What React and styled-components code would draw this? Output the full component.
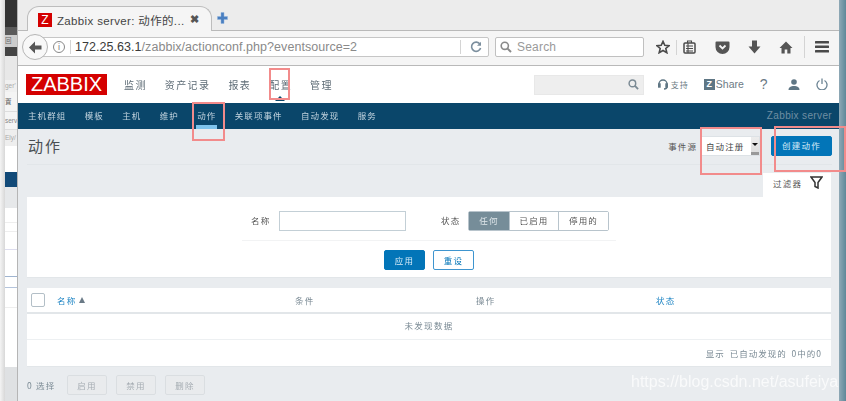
import React from "react";
import styled, { createGlobalStyle } from "styled-components";

const cjk = `"Noto Sans CJK SC", "Liberation Sans", sans-serif`;
const latin = `"Liberation Sans", "Noto Sans CJK SC", sans-serif`;

const Global = createGlobalStyle`
  html, body { margin: 0; padding: 0; background: #e9ecef; }
  * { box-sizing: border-box; }
`;

const Screen = styled.div`
  position: relative;
  width: 846px;
  height: 401px;
  overflow: hidden;
  display: flex;
  font-family: ${cjk};
  filter: blur(0.45px);
`;

/* ---- desktop slivers ---- */
const Margin = styled.div`
  width: 5px;
  flex: none;
  background: linear-gradient(90deg, #f4f4f4, #d8d8d8);
`;
const Behind = styled.div`
  width: 13px;
  flex: none;
  display: flex;
  flex-direction: column;
  overflow: hidden;
  border-right: 1px solid #b5b5b5;
  box-shadow: inset -2px 0 2px #c4c4c4;
`;
const Strip = styled.div`
  height: ${(p) => p.$h}px;
  flex: none;
  background: ${(p) => p.$bg};
  color: ${(p) => p.$fg || "#777"};
  font: 6.5px/${(p) => p.$h}px ${latin};
  white-space: nowrap;
  border-bottom: ${(p) => (p.$line ? `1px solid ${p.$line}` : "0")};
`;
const EdgeRight = styled.div`
  width: 7px;
  flex: none;
  background: linear-gradient(90deg, #8fa9b6, #5f8899);
`;

/* ---- browser chrome ---- */
const Win = styled.div`
  width: 821px;
  flex: none;
  display: flex;
  flex-direction: column;
  background: #e9ecef;
`;
const TabBar = styled.div`
  height: 31px;
  flex: none;
  background: #ececec;
  border-bottom: 1px solid #b9b9b9;
  display: flex;
  align-items: flex-end;
  padding-left: 9px;
`;
const Tab = styled.div`
  width: 185px;
  height: 25px;
  margin-bottom: -1px;
  background: #f5f5f5;
  border: 1px solid #bdbdbd;
  border-bottom: 0;
  border-radius: 12px 12px 0 0;
  display: flex;
  align-items: center;
  padding: 1px 0 0 10px;
`;
const Favicon = styled.div`
  width: 14px;
  height: 14px;
  background: #d40000;
  color: #fff;
  font: 12px/14px ${latin};
  text-align: center;
`;
const TabTitle = styled.div`
  margin-left: 5px;
  width: 133px;
  font: 11.5px ${latin};
  letter-spacing: 0.35px;
  color: #444;
  white-space: nowrap;
`;
const TabClose = styled.div`
  font: bold 11px ${latin};
  color: #555;
`;
const NewTab = styled.div`
  margin: 0 0 6px 5px;
  align-self: flex-end;
  display: flex;
`;
const Toolbar = styled.div`
  height: 35px;
  flex: none;
  background: #f5f5f5;
  border-bottom: 1px solid #b9b9b9;
  display: flex;
  align-items: center;
  position: relative;
`;
const BackBtn = styled.div`
  position: absolute;
  left: 4px;
  top: 3px;
  width: 26px;
  height: 26px;
  border-radius: 50%;
  background: #f8f8f8;
  border: 1px solid #b5b5b5;
  display: flex;
  align-items: center;
  justify-content: center;
`;
const UrlBox = styled.div`
  margin: 0 0 2px 22px;
  width: 449px;
  height: 20px;
  flex: none;
  background: #fff;
  border: 1px solid #c6c6c6;
  border-radius: 0 2px 2px 0;
  display: flex;
  align-items: center;
  padding-left: 12px;
`;
const InfoIcon = styled.div`
  width: 12px;
  height: 12px;
  flex: none;
  border-radius: 50%;
  border: 1px solid #888;
  color: #777;
  font: 9px/10px ${latin};
  text-align: center;
`;
const Divider = styled.div`
  width: 1px;
  flex: none;
  height: ${(p) => p.$h || 14}px;
  background: #d4d4d4;
  margin: 0 ${(p) => p.$r || 0}px 0 ${(p) => p.$l || 0}px;
`;
const UrlText = styled.div`
  font: 12.5px ${latin};
  letter-spacing: 0.05px;
  color: #8a8a8a;
  width: 385px;
  flex: none;
  white-space: nowrap;
  span { color: #3a3a3a; }
`;
const SearchBox = styled.div`
  margin: 0 0 2px 6px;
  width: 149px;
  height: 20px;
  flex: none;
  background: #fff;
  border: 1px solid #c0c0c0;
  border-radius: 2px;
  display: flex;
  align-items: center;
  padding-left: 4px;
  gap: 5px;
  font: 12px ${latin};
  letter-spacing: 0.2px;
  color: #9a9a9a;
`;
const ToolIcons = styled.div`
  display: flex;
  align-items: center;
  margin: 0 0 2px 12px;
`;
const ToolSlot = styled.div`
  width: ${(p) => p.$w}px;
  margin-left: ${(p) => p.$ml || 0}px;
  flex: none;
  display: flex;
  justify-content: center;
`;

/* ---- zabbix ---- */
const Head = styled.div`
  height: 37px;
  flex: none;
  background: #fff;
  display: flex;
  align-items: center;
  padding: 0 0 1px 8px;
`;
const Logo = styled.div`
  width: 81px;
  height: 21px;
  margin-top: 1px;
  flex: none;
  background: #d40000;
  color: #fff;
  font: 20px/21px ${latin};
  text-align: center;
`;
const Menu = styled.div`
  display: flex;
  margin-left: 17px;
  gap: 18px;
`;
const MenuItem = styled.div`
  font-size: 10px;
  letter-spacing: 1.4px;
  color: #5d6b75;
  white-space: nowrap;
  position: relative;
`;
const Caret = styled.div`
  position: absolute;
  left: 6px;
  top: 19px;
  border: 5px solid transparent;
  border-top: 0;
  border-bottom-color: #0a466a;
`;
const HeadSearch = styled.div`
  margin: 1px 0 0 201px;
  width: 110px;
  height: 20px;
  flex: none;
  background: #eee;
  border: 1px solid #e8e8e8;
  display: flex;
  justify-content: flex-end;
  align-items: center;
  padding-right: 4px;
`;
const HeadLinks = styled.div`
  display: flex;
  align-items: center;
  margin-left: 14px;
  color: #6c7a84;
`;
const Support = styled.div`
  display: flex;
  align-items: center;
  gap: 3px;
  font-size: 8px;
  letter-spacing: 0.8px;
  width: 46px;
`;
const ZBox = styled.div`
  width: 11px;
  height: 11px;
  background: #5f7684;
  color: #fff;
  font: bold 9px/11px ${latin};
  text-align: center;
`;
const Share = styled.div`
  display: flex;
  align-items: center;
  gap: 1px;
  width: 56px;
  font: 10.5px ${latin};
`;
const Help = styled.div`
  width: 28px;
  font: 14px ${latin};
  color: #6c7a84;
`;
const HeadIcon = styled.div`
  width: ${(p) => p.$w}px;
  display: flex;
`;

const Nav = styled.div`
  height: 26px;
  flex: none;
  background: #0a466a;
  display: flex;
  align-items: center;
  padding: 0 7px 2px 10px;
`;
const NavItem = styled.div`
  position: relative;
  font-size: 8.5px;
  letter-spacing: 1.1px;
  color: #c3d4df;
  margin-right: 18.3px;
  white-space: nowrap;
`;
const NavBar = styled.div`
  position: absolute;
  left: -1px;
  right: -1px;
  top: 16px;
  height: 4px;
  background: #7fc4ec;
`;
const NavRight = styled.div`
  margin-left: auto;
  font: 10px ${latin};
  letter-spacing: 0.35px;
  color: #6f8ea3;
`;

const Page = styled.div`
  flex: 1;
  padding: 0 8px 0 9px;
  display: flex;
  flex-direction: column;
`;
const TitleRow = styled.div`
  height: 36px;
  flex: none;
  margin-right: -1px;
  border-bottom: 1px solid #e2e6e9;
  display: flex;
  align-items: center;
  padding: 0 0 2px 1px;
`;
const Title = styled.div`
  font-size: 15px;
  letter-spacing: 2px;
  color: #4a4f53;
`;
const Source = styled.div`
  margin-left: auto;
  font-size: 8.5px;
  letter-spacing: 1.1px;
  color: #555;
`;
const Select = styled.div`
  margin-left: 4px;
  width: 59px;
  height: 20px;
  background: #fff;
  border: 1px solid #dde2e6;
  display: flex;
  align-items: center;
  font-size: 8.5px;
  letter-spacing: 1.1px;
  color: #444;
  padding-left: 4px;
`;
const SelectArrow = styled.div`
  margin-left: auto;
  width: 8px;
  height: 18px;
  background: linear-gradient(#ededed, #ddd 85%, #999 85%);
  display: flex;
  align-items: center;
  justify-content: center;
  &::after {
    content: "";
    border: 3px solid transparent;
    border-bottom: 0;
    border-top-color: #111;
    margin-top: -3px;
  }
`;
const Btn = styled.div`
  height: 20px;
  width: ${(p) => p.$w || 41}px;
  margin-left: ${(p) => p.$ml || 0}px;
  border-radius: 2px;
  display: flex;
  align-items: center;
  justify-content: center;
  padding-bottom: 1px;
  font-size: 8.5px;
  letter-spacing: 1.2px;
  background: ${(p) => (p.$outline ? "#fff" : "#0275b8")};
  border: 1px solid ${(p) => (p.$outline ? "#3e95cf" : "#0275b8")};
  color: ${(p) => (p.$outline ? "#0275b8" : "#d8ecf8")};
`;
const FilterTabRow = styled.div`
  margin-top: 8px;
  height: 24px;
  flex: none;
  display: flex;
  justify-content: flex-end;
`;
const FilterTab = styled.div`
  width: 68px;
  background: #fff;
  display: flex;
  align-items: center;
  padding: 0 8px 5px 10px;
  justify-content: space-between;
  font-size: 8.5px;
  letter-spacing: 1.2px;
  color: #555;
`;
const FilterCard = styled.div`
  height: 81px;
  flex: none;
  background: #fff;
  border-bottom: 1px solid #e2e6e9;
  display: flex;
  flex-direction: column;
  align-items: center;
  padding-top: 14px;
`;
const FilterFields = styled.div`
  width: 374px;
  height: 30px;
  border-bottom: 1px solid #f2f3f4;
  display: flex;
  align-items: flex-start;
  padding-left: 9px;
`;
const FieldLabel = styled.div`
  font-size: 8.5px;
  line-height: 18px;
  letter-spacing: 1.3px;
  color: #555;
  width: ${(p) => p.$w}px;
  flex: none;
`;
const TextInput = styled.div`
  width: 127px;
  height: 20px;
  flex: none;
  border: 1px solid #c3cfd6;
  margin-right: 35px;
`;
const Segments = styled.div`
  display: flex;
  height: 20px;
  border: 1px solid #b8c4cc;
  border-radius: 2px;
  flex: none;
`;
const Segment = styled.div`
  width: ${(p) => p.$w}px;
  display: flex;
  align-items: center;
  justify-content: center;
  padding-bottom: 2px;
  font-size: 8.5px;
  letter-spacing: 1.2px;
  background: ${(p) => (p.$on ? "#768d99" : "#fff")};
  color: ${(p) => (p.$on ? "#dfe6ea" : "#555")};
  & + & { border-left: 1px solid #b8c4cc; }
`;
const FilterActions = styled.div`
  display: flex;
  margin-top: 9px;
`;
const Table = styled.div`
  margin-top: 10px;
  height: 79px;
  flex: none;
  background: #fff;
  border-bottom: 1px solid #e2e6e9;
  display: flex;
  flex-direction: column;
`;
const HeadRow = styled.div`
  height: 26px;
  flex: none;
  border-bottom: 2px solid #e2e6e9;
  display: grid;
  grid-template-columns: 30px 238px 181px 180px 1fr;
  align-items: center;
  padding-bottom: 1px;
  font-size: 8.5px;
  letter-spacing: 1.3px;
  color: #7a8a94;
`;
const Check = styled.div`
  width: 14px;
  height: 14px;
  margin-left: 4px;
  border: 1px solid #b3bfc7;
  border-radius: 2px;
`;
const ColLink = styled.div`
  color: #1f85c4;
  display: flex;
  align-items: center;
  gap: 2px;
  &.sort::after {
    content: "";
    border: 3.5px solid transparent;
    border-top: 0;
    border-bottom: 6px solid #6a7a86;
  }
`;
const EmptyRow = styled.div`
  height: 26px;
  flex: none;
  border-bottom: 1px solid #edf0f2;
  display: flex;
  align-items: center;
  justify-content: center;
  padding-bottom: 3px;
  font-size: 8.5px;
  letter-spacing: 1.3px;
  color: #7a8a94;
`;
const TableFoot = styled.div`
  flex: 1;
  display: flex;
  align-items: center;
  justify-content: flex-end;
  padding: 0 9px 0 0;
  font-size: 8.5px;
  letter-spacing: 1px;
  color: #7a8a94;
  word-spacing: 2px;
`;
const Bulk = styled.div`
  flex: 1;
  display: flex;
  align-items: center;
  padding-top: 1px;
  font-size: 8.5px;
  letter-spacing: 1.2px;
  color: #7a8a94;
  gap: 9px;
`;
const BulkCount = styled.div`
  width: 31px;
`;
const GhostBtn = styled.div`
  width: 40px;
  height: 20px;
  background: #e9ebed;
  border: 1px solid #dadee1;
  border-radius: 2px;
  display: flex;
  align-items: center;
  justify-content: center;
  color: #a6adb3;
`;

/* ---- overlays ---- */
const Mark = styled.div`
  position: absolute;
  left: ${(p) => p.$x}px;
  top: ${(p) => p.$y}px;
  width: ${(p) => p.$w}px;
  height: ${(p) => p.$h}px;
  border: 2px solid #f28b8b;
  pointer-events: none;
`;
const Watermark = styled.div`
  position: absolute;
  left: 631px;
  top: 373px;
  font: 16px ${latin};
  color: rgba(255, 255, 255, 0.72);
  white-space: nowrap;
`;

const Search = ({ c = "#888", s = 12 }) => (
  <svg width={s} height={s} viewBox="0 0 12 12" fill="none" stroke={c} strokeWidth="1.6">
    <circle cx="4.8" cy="4.8" r="3.6" />
    <path d="M7.6 7.6L11 11" strokeWidth="2" />
  </svg>
);

export default function App() {
  return (
    <Screen>
      <Global />
      <Margin />
      <Behind>
        <Strip $h={27} $bg="#333" />
        <Strip $h={8} $bg="#5a5a5a" />
        <Strip $h={12} $bg="#ccc" $fg="#666">回</Strip>
        <Strip $h={9} $bg="#444" />
        <Strip $h={24} $bg="#e8e8e8" />
        <Strip $h={12} $bg="#f0f0f0" $fg="#aaa">ger'</Strip>
        <Strip $h={20} $bg="#f4f4f4" $fg="#555" $line="#ddd">置</Strip>
        <Strip $h={18} $bg="#f4f4f4" $fg="#888" $line="#ddd">serv</Strip>
        <Strip $h={16} $bg="#eee" $fg="#aaa">Ely/</Strip>
        <Strip $h={26} $bg="#fff" />
        <Strip $h={15} $bg="#124a78" />
        <Strip $h={21} $bg="#e6e8ea" />
        <Strip $h={15} $bg="#fff" $line="#eee" />
        <Strip $h={9} $bg="#fff" $line="#eee" />
        <Strip $h={18} $bg="#fff" $line="#dde" />
        <Strip $h={27} $bg="#fff" $line="#9fb4d0" />
        <Strip $h={11} $bg="#fff" $line="#b4c4dc" />
        <Strip $h={20} $bg="#fff" $line="#eee" />
        <Strip $h={59} $bg="#fff" />
        <Strip $h={34} $bg="#dfe1e3" />
      </Behind>
      <Win>
        <TabBar>
          <Tab>
            <Favicon>Z</Favicon>
            <TabTitle>Zabbix server: 动作的...</TabTitle>
            <TabClose>✖</TabClose>
          </Tab>
          <NewTab>
            <svg width="11" height="12" viewBox="0 0 11 12">
              <path d="M4 0.5h3v4h3.5v3H7v4H4v-4H0.5v-3H4z" fill="#4a7fc0" stroke="#8fb2dc" strokeWidth="0.5" />
            </svg>
          </NewTab>
        </TabBar>
        <Toolbar>
          <BackBtn>
            <svg width="14" height="13" viewBox="0 0 14 13">
              <path d="M7 0.5L1 6.5l6 6v-4h6.5v-4H7z" fill="#555" />
            </svg>
          </BackBtn>
          <UrlBox>
            <InfoIcon>i</InfoIcon>
            <Divider $l={5} $r={4} />
            <UrlText>
              <span>172.25.63.1</span>/zabbix/actionconf.php?eventsource=2
            </UrlText>
            <Divider $r={9} />
            <svg width="12" height="12" viewBox="0 0 12 12" fill="none">
              <path d="M10 3.2A4.6 4.6 0 1 0 10.6 7" stroke="#7c8f9e" strokeWidth="1.6" />
              <path d="M11 0.8v4H7z" fill="#7c8f9e" />
            </svg>
          </UrlBox>
          <SearchBox>
            <Search c="#8a8a8a" s={12} />
            Search
          </SearchBox>
          <ToolIcons>
            <ToolSlot $w={14}>
              <svg width="15" height="14" viewBox="0 0 15 14">
                <path d="M7.5 1l1.9 4.2 4.6.4-3.5 3 1.1 4.5-4.1-2.4-4.1 2.4 1.1-4.5-3.5-3 4.6-.4z" fill="none" stroke="#4a4a4a" strokeWidth="1.7" />
              </svg>
            </ToolSlot>
            <Divider $l={6} $h={15} />
            <ToolSlot $w={24}>
              <svg width="13" height="14" viewBox="0 0 13 14" fill="none" stroke="#4a4a4a" strokeWidth="1.5">
                <rect x="1" y="3" width="11" height="10" rx="1" />
                <path d="M4.5 3V1h4v2M3 6h7M3 8.5h7M3 11h7M5 3v10" strokeWidth="1.1" />
              </svg>
            </ToolSlot>
            <ToolSlot $w={42}>
              <svg width="15" height="13" viewBox="0 0 15 13">
                <path d="M1.5 0.5h12a1 1 0 0 1 1 1v4.5a7 7 0 0 1-14 0V1.5a1 1 0 0 1 1-1z" fill="#555" />
                <path d="M4.5 4.5l3 3 3-3" fill="none" stroke="#f5f5f5" strokeWidth="1.8" />
              </svg>
            </ToolSlot>
            <ToolSlot $w={22}>
              <svg width="13" height="14" viewBox="0 0 13 14">
                <path d="M4 0.5h5v6h3.5L6.5 13.5 0.5 6.5H4z" fill="#555" />
              </svg>
            </ToolSlot>
            <ToolSlot $w={36} $ml={3}>
              <svg width="14" height="13" viewBox="0 0 14 13">
                <path d="M7 0.5L0.5 7H2.5v5.5h3.2V8.5h2.6v4h3.2V7h2z" fill="#555" />
              </svg>
            </ToolSlot>
            <Divider $h={22} />
            <ToolSlot $w={34}>
              <svg width="14" height="12" viewBox="0 0 14 12" fill="#4a4a4a">
                <rect width="14" height="2.4" rx="0.5" />
                <rect y="4.5" width="14" height="2.4" rx="0.5" />
                <rect y="9" width="14" height="2.4" rx="0.5" />
              </svg>
            </ToolSlot>
          </ToolIcons>
        </Toolbar>
        <Head>
          <Logo>ZABBIX</Logo>
          <Menu>
            <MenuItem>监测</MenuItem>
            <MenuItem>资产记录</MenuItem>
            <MenuItem>报表</MenuItem>
            <MenuItem>
              配置
              <Caret />
            </MenuItem>
            <MenuItem>管理</MenuItem>
          </Menu>
          <HeadSearch>
            <Search c="#7b8a94" s={11} />
          </HeadSearch>
          <HeadLinks>
            <Support>
              <svg width="10" height="11" viewBox="0 0 10 11" fill="none" stroke="#5f7684" strokeWidth="1.4">
                <path d="M1 7V5a4 4 0 0 1 8 0v2M9 7.5C9 9 7.5 10 6 10" />
                <rect x="0.5" y="5" width="1.5" height="3" fill="#5f7684" />
                <rect x="8" y="5" width="1.5" height="3" fill="#5f7684" />
              </svg>
              支持
            </Support>
            <Share>
              <ZBox>Z</ZBox>
              Share
            </Share>
            <Help>?</Help>
            <HeadIcon $w={28}>
              <svg width="12" height="11" viewBox="0 0 12 11" fill="#5f7684">
                <circle cx="6" cy="3" r="2.8" />
                <path d="M0.5 11c0-3 2.5-4 5.5-4s5.5 1 5.5 4z" />
              </svg>
            </HeadIcon>
            <HeadIcon $w={12}>
              <svg width="12" height="12" viewBox="0 0 12 12" fill="none" stroke="#6c8494" strokeWidth="1.3">
                <path d="M3.5 2.5a5 5 0 1 0 5 0" />
                <path d="M6 0.5v5.5" />
              </svg>
            </HeadIcon>
          </HeadLinks>
        </Head>
        <Nav>
          <NavItem>主机群组</NavItem>
          <NavItem>模板</NavItem>
          <NavItem>主机</NavItem>
          <NavItem>维护</NavItem>
          <NavItem>
            动作
            <NavBar />
          </NavItem>
          <NavItem>关联项事件</NavItem>
          <NavItem>自动发现</NavItem>
          <NavItem>服务</NavItem>
          <NavRight>Zabbix server</NavRight>
        </Nav>
        <Page>
          <TitleRow>
            <Title>动作</Title>
            <Source>事件源</Source>
            <Select>
              自动注册
              <SelectArrow />
            </Select>
            <Btn $w={61} $ml={11}>创建动作</Btn>
          </TitleRow>
          <FilterTabRow>
            <FilterTab>
              过滤器
              <svg width="13" height="13" viewBox="0 0 13 13" fill="none" stroke="#333" strokeWidth="1.5">
                <path d="M1 1h11L8 6.5V12L5 10.5V6.5z" />
              </svg>
            </FilterTab>
          </FilterTabRow>
          <FilterCard>
            <FilterFields>
              <FieldLabel $w={28}>名称</FieldLabel>
              <TextInput />
              <FieldLabel $w={27}>状态</FieldLabel>
              <Segments>
                <Segment $w={40} $on>任何</Segment>
                <Segment $w={49}>已启用</Segment>
                <Segment $w={50}>停用的</Segment>
              </Segments>
            </FilterFields>
            <FilterActions>
              <Btn>应用</Btn>
              <Btn $outline $ml={8}>重设</Btn>
            </FilterActions>
          </FilterCard>
          <Table>
            <HeadRow>
              <Check />
              <ColLink className="sort">名称</ColLink>
              <div>条件</div>
              <div>操作</div>
              <ColLink>状态</ColLink>
            </HeadRow>
            <EmptyRow>未发现数据</EmptyRow>
            <TableFoot>显示 已自动发现的 0中的0</TableFoot>
          </Table>
          <Bulk>
            <BulkCount>0 选择</BulkCount>
            <GhostBtn>启用</GhostBtn>
            <GhostBtn>禁用</GhostBtn>
            <GhostBtn>删除</GhostBtn>
          </Bulk>
        </Page>
      </Win>
      <EdgeRight />
      <Mark $x={269} $y={68} $w={21} $h={32} />
      <Mark $x={192} $y={102} $w={33} $h={39} />
      <Mark $x={700} $y={127} $w={62} $h={48} />
      <Mark $x={774} $y={126} $w={72} $h={46} />
      <Watermark>https://blog.csdn.net/asufeiya</Watermark>
    </Screen>
  );
}
